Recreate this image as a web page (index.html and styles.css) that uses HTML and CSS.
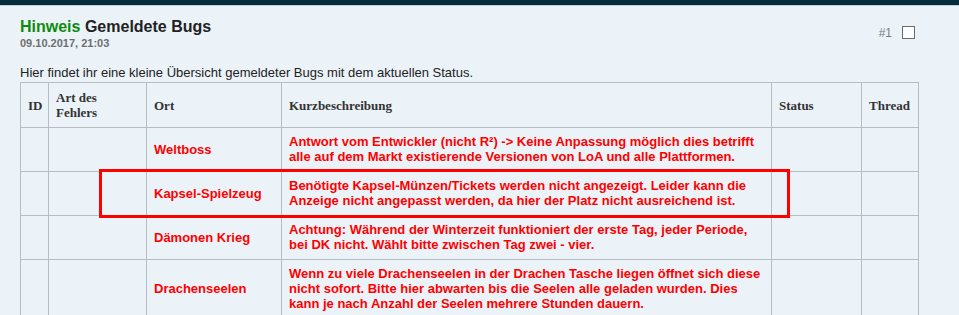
FILE: index.html
```html
<!DOCTYPE html>
<html lang="de">
<head>
<meta charset="utf-8">
<title>Gemeldete Bugs</title>
<link rel="stylesheet" href="styles.css">
</head>
<body>
<div class="topbar"></div>
<main class="post">
  <header class="post-head">
    <div class="title-block">
      <h1 class="title"><span class="prefix">Hinweis</span> Gemeldete Bugs</h1>
      <div class="date">09.10.2017, 21:03</div>
    </div>
    <div class="meta">
      <span class="num">#1</span>
      <input class="check" type="checkbox" aria-label="Beitrag markieren">
    </div>
  </header>
  <p class="intro">Hier findet ihr eine kleine Übersicht gemeldeter Bugs mit dem aktuellen Status.</p>
  <table class="bugs">
    <colgroup>
      <col class="c-id"><col class="c-art"><col class="c-ort"><col class="c-desc"><col class="c-status"><col class="c-thread">
    </colgroup>
    <thead>
      <tr>
        <th>ID</th>
        <th class="art">Art des Fehlers</th>
        <th>Ort</th>
        <th>Kurzbeschreibung</th>
        <th>Status</th>
        <th>Thread</th>
      </tr>
    </thead>
    <tbody>
      <tr>
        <td></td><td></td>
        <td class="red">Weltboss</td>
        <td class="red desc">Antwort vom Entwickler (nicht R²) -&gt; Keine Anpassung möglich dies betrifft alle auf dem Markt existierende Versionen von LoA und alle Plattformen.</td>
        <td></td><td></td>
      </tr>
      <tr>
        <td></td><td></td>
        <td class="red">Kapsel-Spielzeug</td>
        <td class="red desc">Benötigte Kapsel-Münzen/Tickets werden nicht angezeigt. Leider kann die Anzeige nicht angepasst werden, da hier der Platz nicht ausreichend ist.</td>
        <td></td><td></td>
      </tr>
      <tr>
        <td></td><td></td>
        <td class="red">Dämonen Krieg</td>
        <td class="red desc">Achtung: Während der Winterzeit funktioniert der erste Tag, jeder Periode, bei DK nicht. Wählt bitte zwischen Tag zwei - vier.</td>
        <td></td><td></td>
      </tr>
      <tr>
        <td></td><td></td>
        <td class="red">Drachenseelen</td>
        <td class="red desc">Wenn zu viele Drachenseelen in der Drachen Tasche liegen öffnet sich diese nicht sofort. Bitte hier abwarten bis die Seelen alle geladen wurden. Dies kann je nach Anzahl der Seelen mehrere Stunden dauern.</td>
        <td></td><td></td>
      </tr>
    </tbody>
  </table>
  <div class="highlight" aria-hidden="true"></div>
</main>
</body>
</html>
```

FILE: styles.css
```css
html, body {
  margin: 0;
  padding: 0;
  background: #ebf3f9;
}
body {
  font-family: "Liberation Sans", Arial, sans-serif;
  color: #222;
}
.topbar {
  height: 5px;
  background: #052b3d;
  border-bottom: 1px solid #c5ced5;
}
.post {
  position: relative;
  padding: 12px 44px 0 20px;
}
.post-head {
  display: flex;
  justify-content: space-between;
  align-items: flex-start;
}
.title {
  margin: 0;
  font-size: 16px;
  line-height: 18px;
  font-weight: bold;
  color: #222;
}
.prefix {
  color: #0f8a0f;
}
.date {
  font-size: 11px;
  line-height: 14px;
  font-weight: bold;
  color: #6e6e6e;
}
.meta {
  display: flex;
  align-items: center;
  gap: 10px;
  padding-top: 6px;
}
.num {
  font-size: 12px;
  color: #7b7b7b;
  line-height: 14px;
  padding-top: 2px;
}
.check {
  appearance: none;
  -webkit-appearance: none;
  margin: 0;
  width: 13px;
  height: 13px;
  box-sizing: border-box;
  border: 1px solid #6b6b6b;
  background: #fff;
}
.intro {
  margin: 15px 0 2px;
  font-size: 13px;
  line-height: 15px;
  color: #222;
}
.bugs {
  border-collapse: collapse;
  table-layout: fixed;
  width: 898px;
}
.c-id { width: 28px; }
.c-art { width: 98px; }
.c-ort { width: 135px; }
.c-desc { width: 490px; }
.c-status { width: 90px; }
.c-thread { width: 57px; }
.bugs th,
.bugs td {
  border: 1px solid #b7bec3;
  vertical-align: middle;
  text-align: left;
  line-height: 15px;
}
.bugs th {
  padding: 7px 4px 7px 7px;
  font-family: "Liberation Serif", "Times New Roman", serif;
  font-size: 13px;
  font-weight: bold;
  color: #333;
  height: 30px;
}
.bugs th.art {
  padding-right: 20px;
}
.bugs td {
  padding: 6px 4px 7px 7px;
  font-size: 13px;
  height: 30px;
}
.red {
  color: #ff0000;
  font-weight: bold;
}
.bugs td.desc {
  padding-right: 6px;
}
.highlight {
  position: absolute;
  left: 99px;
  top: 163px;
  width: 691px;
  height: 49px;
  box-sizing: border-box;
  border: 3px solid #ff0000;
}
```
